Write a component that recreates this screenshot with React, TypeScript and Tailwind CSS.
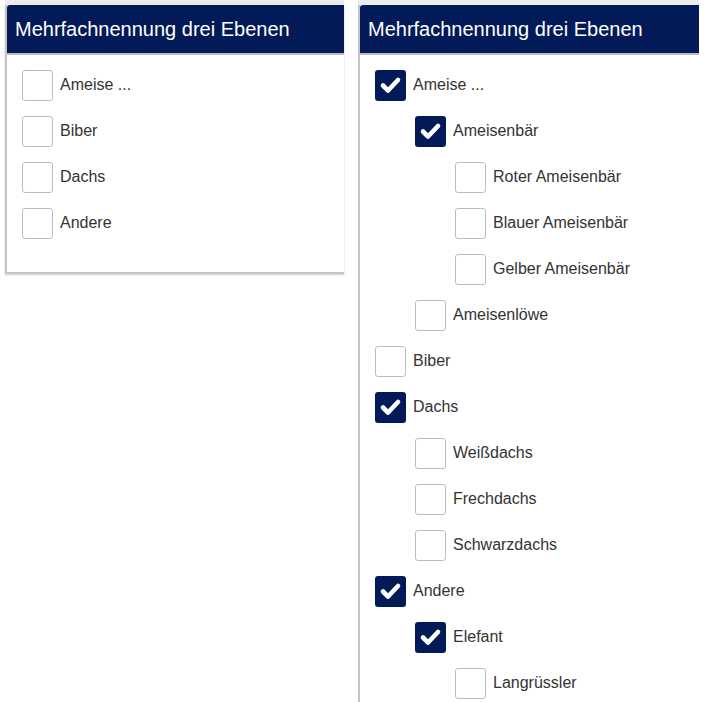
import React from "react";

type Item = { label: string; checked?: boolean; level: number };

const leftItems: Item[] = [
  { label: "Ameise ...", level: 0 },
  { label: "Biber", level: 0 },
  { label: "Dachs", level: 0 },
  { label: "Andere", level: 0 },
];

const rightItems: Item[] = [
  { label: "Ameise ...", level: 0, checked: true },
  { label: "Ameisenbär", level: 1, checked: true },
  { label: "Roter Ameisenbär", level: 2 },
  { label: "Blauer Ameisenbär", level: 2 },
  { label: "Gelber Ameisenbär", level: 2 },
  { label: "Ameisenlöwe", level: 1 },
  { label: "Biber", level: 0 },
  { label: "Dachs", level: 0, checked: true },
  { label: "Weißdachs", level: 1 },
  { label: "Frechdachs", level: 1 },
  { label: "Schwarzdachs", level: 1 },
  { label: "Andere", level: 0, checked: true },
  { label: "Elefant", level: 1, checked: true },
  { label: "Langrüssler", level: 2 },
];

const indent = ["pl-0", "pl-10", "pl-20"];

function Row({ item }: { item: Item }) {
  return (
    <div className={`flex h-[30px] items-center ${indent[item.level]}`}>
      {item.checked ? (
        <span className="flex h-[31px] w-[31px] shrink-0 items-center justify-center rounded-[3px] bg-[#021a57]">
          <svg viewBox="0 0 31 31" className="h-[31px] w-[31px]">
            <polyline
              points="8,15.5 13,20.5 23,10"
              fill="none"
              stroke="#fff"
              strokeWidth="4.6"
              strokeLinecap="round"
              strokeLinejoin="round"
            />
          </svg>
        </span>
      ) : (
        <span className="h-[31px] w-[31px] shrink-0 rounded-[3px] border border-[#bdbdbd] bg-white" />
      )}
      <span className="ml-[7px] text-[16px] text-[#333]">{item.label}</span>
    </div>
  );
}

function Panel({ items, full }: { items: Item[]; full?: boolean }) {
  return (
    <div
      className={`flex flex-col border-l-2 border-[#c4c4c4] bg-white ${
        full ? "flex-1" : "border-b-2 pb-[34px] shadow-[0_1px_2px_rgba(0,0,0,0.2)]"
      }`}
    >
      <div className="flex h-[50px] items-center rounded-tl-[3px] border-b-2 border-[#bdbdbd] bg-[#021a57] px-[8px]">
        <h1 className="text-[20px] text-white">Mehrfachnennung drei Ebenen</h1>
      </div>
      <div className="flex flex-col gap-4 pl-[15px] pt-[15px]">
        {items.map((it, i) => (
          <Row key={i} item={it} />
        ))}
      </div>
    </div>
  );
}

export default function App() {
  return (
    <div className="flex h-[702px] w-[714px] overflow-hidden bg-white font-['Liberation_Sans',Arial,sans-serif]">
      <div className="ml-[5px] flex w-[339px] flex-col">
        <div className="h-[5px] bg-[#ececec]" />
        <Panel items={leftItems} />
      </div>
      <div className="ml-[14px] flex w-[341px] flex-col">
        <div className="h-[5px] bg-[#ececec]" />
        <Panel items={rightItems} full />
      </div>
    </div>
  );
}
